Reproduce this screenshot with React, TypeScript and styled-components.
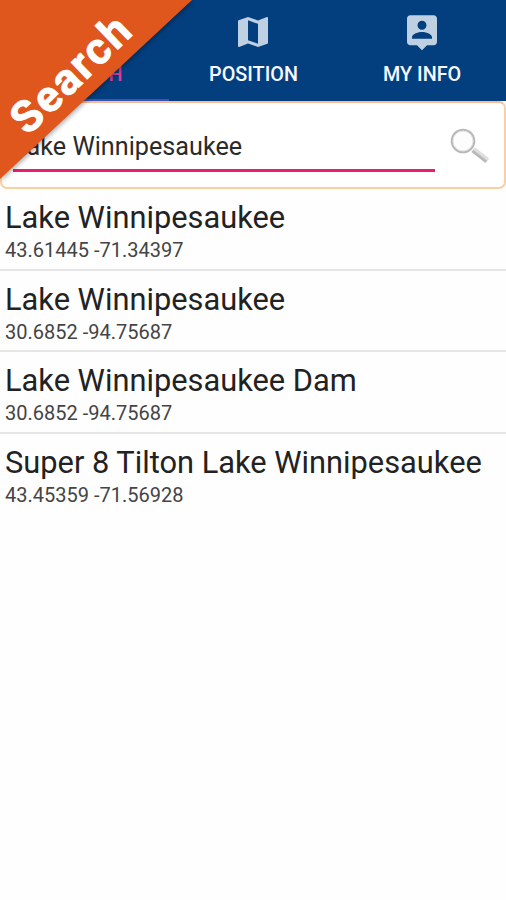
import React from "react";
import styled, { createGlobalStyle } from "styled-components";

const GlobalStyle = createGlobalStyle`
  * { box-sizing: border-box; }
  body { margin: 0; background: #fefefe; font-family: Roboto, "Liberation Sans", sans-serif; }
`;

const Screen = styled.main`
  position: relative;
  width: 506px;
  height: 900px;
  overflow: hidden;
  background: #fefefe;
`;

const TabBar = styled.nav`
  display: grid;
  grid-template-columns: repeat(3, 1fr);
  height: 101px;
  background: #033f7f;
`;

const Tab = styled.div<{ $active?: boolean }>`
  display: flex;
  flex-direction: column;
  align-items: center;
  padding-top: 12px;
  color: ${(p) => (p.$active ? "#d8409c" : "#f7f9ff")};
  border-bottom: 2px solid ${(p) => (p.$active ? "#3f51b5" : "#033f7f")};
  svg { display: block; width: 40px; height: 40px; fill: #bfd0e2; }
`;

const TabLabel = styled.span`
  margin-top: 11px;
  padding-left: 1px;
  font-size: 19.8px;
  line-height: 24px;
  font-weight: 500;
  white-space: nowrap;
`;

const SearchPanel = styled.section`
  display: flex;
  height: 88px;
  padding: 0 13px 0 11px;
  border: 2px solid #fbcfa4;
  border-top-color: #f6bd94;
  border-radius: 7px;
  background: #fff;
`;

const Query = styled.div`
  width: 422px;
  height: 69px;
  padding: 28px 0 0;
  border-bottom: 3px solid #e91e70;
  font-size: 25.2px;
  line-height: 32px;
  color: #2a2a2a;
  white-space: nowrap;
`;

const SearchIcon = styled.svg`
  display: block;
  width: 42px;
  height: 38px;
  margin: 23px 0 0 14px;
`;

const Row = styled.article`
  height: 81.7px;
  padding: 10px 5px 0;
  border-bottom: 2px solid #e6e6e6;
  white-space: nowrap;
  &:last-child { border-bottom: 0; }
`;

const Title = styled.h2`
  margin: 0;
  font-size: 30.8px;
  line-height: 38px;
  font-weight: 400;
  color: #222;
`;

const Coordinates = styled.p`
  margin: 2px 0 0;
  font-size: 20px;
  line-height: 22px;
  color: #444;
`;

const Ribbon = styled.div`
  position: absolute;
  top: 0;
  left: 0;
  display: grid;
  width: 192px;
  height: 179px;
  > * { grid-area: 1 / 1; }
`;

const RibbonFace = styled.svg`
  display: block;
  overflow: visible;
  filter: drop-shadow(1px 2px 2px rgba(0, 0, 0, 0.3));
`;

const RibbonLabel = styled.strong`
  place-self: start;
  width: 152px;
  margin: 57px 0 0 -4px;
  font-size: 44px;
  line-height: 32px;
  letter-spacing: 2px;
  white-space: nowrap;
  font-weight: 700;
  color: #fff;
  -webkit-text-stroke: 0.8px #fff;
  transform: rotate(-44deg);
`;

const places = [
  { name: "Lake Winnipesaukee", at: "43.61445 -71.34397" },
  { name: "Lake Winnipesaukee", at: "30.6852 -94.75687" },
  { name: "Lake Winnipesaukee Dam", at: "30.6852 -94.75687" },
  { name: "Super 8 Tilton Lake Winnipesaukee", at: "43.45359 -71.56928" },
];

export default function App() {
  return (
    <Screen>
      <GlobalStyle />
      <TabBar>
        <Tab $active>
          <svg viewBox="0 0 24 24" />
          <TabLabel>SEARCH</TabLabel>
        </Tab>
        <Tab>
          <svg viewBox="0 0 24 24">
            <path d="M20.5 3l-.16.03L15 5.1 9 3 3.36 4.9c-.21.07-.36.25-.36.48V20.5c0 .28.22.5.5.5l.16-.03L9 18.9l6 2.1 5.64-1.9c.21-.07.36-.25.36-.48V3.5c0-.28-.22-.5-.5-.5zM15 19l-6-2.11V5l6 2.11V19z" />
          </svg>
          <TabLabel>POSITION</TabLabel>
        </Tab>
        <Tab>
          <svg viewBox="0 0 24 24">
            <path d="M19 2H5c-1.11 0-2 .9-2 2v14c0 1.1.89 2 2 2h4l3 3 3-3h4c1.1 0 2-.9 2-2V4c0-1.1-.9-2-2-2zm-7 3.3c1.49 0 2.7 1.21 2.7 2.7 0 1.49-1.21 2.7-2.7 2.7-1.49 0-2.7-1.21-2.7-2.7 0-1.49 1.21-2.7 2.7-2.7zM18 16H6v-.9c0-2 4-3.1 6-3.1s6 1.1 6 3.1v.9z" />
          </svg>
          <TabLabel>MY INFO</TabLabel>
        </Tab>
      </TabBar>
      <SearchPanel>
        <Query>Lake Winnipesaukee</Query>
        <SearchIcon viewBox="0 0 42 38" fill="none">
          <path d="M24 24L38 35" stroke="#b8b8b8" strokeWidth="5" />
          <path d="M25 22.5L39 33.5" stroke="#dedede" strokeWidth="3" />
          <circle cx="14" cy="15" r="11.2" fill="#fdfdfd" stroke="#b8b8b8" strokeWidth="2.2" />
          <circle cx="14" cy="15" r="10" stroke="#e5e5e5" strokeWidth="1" />
        </SearchIcon>
      </SearchPanel>
      <section>
        {places.map((place, i) => (
          <Row key={i}>
            <Title>{place.name}</Title>
            <Coordinates>{place.at}</Coordinates>
          </Row>
        ))}
      </section>
      <Ribbon>
        <RibbonFace width="192" height="179" viewBox="0 0 192 179">
          <path d="M0 0H192L0 179Z" fill="#e0571e" />
        </RibbonFace>
        <RibbonLabel>Search</RibbonLabel>
      </Ribbon>
    </Screen>
  );
}
